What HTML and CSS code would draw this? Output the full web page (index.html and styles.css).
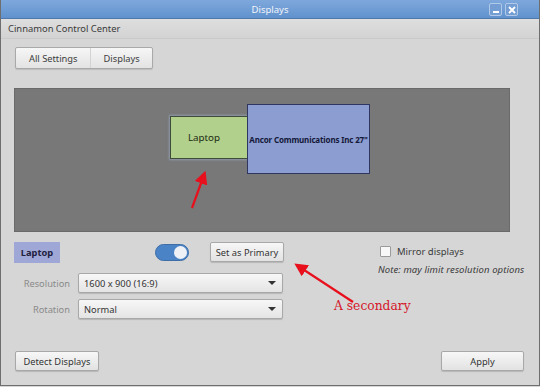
FILE: index.html
```html
<!DOCTYPE html>
<html lang="en">
<head>
  <meta charset="UTF-8" />
  <title>Displays</title>
  <link rel="stylesheet" href="styles.css">
</head>
<body>
  <div class="window">
    <div class="titlebar">
      <span class="title">Displays</span>
      <div class="wm-buttons">
        <span class="wm-btn"><svg width="10" height="10" viewBox="0 0 10 10"><rect x="2" y="6" width="6" height="2" fill="#fff"/></svg></span>
        <span class="wm-btn"><svg width="10" height="10" viewBox="0 0 10 10"><path d="M2 2 L8 8 M8 2 L2 8" stroke="#fff" stroke-width="1.8"/></svg></span>
      </div>
    </div>

    <div class="appbar">Cinnamon Control Center</div>

    <div class="content">
      <div class="crumbs">
        <span class="crumb">All Settings</span>
        <span class="crumb">Displays</span>
      </div>

      <div class="arrangement">
        <div class="monitor laptop">Laptop</div>
        <div class="monitor ancor">Ancor Communications Inc 27"</div>
      </div>

      <div class="controls">
        <div class="left-col">
          <div class="row-top">
            <span class="output-name">Laptop</span>
            <span class="switch"><span class="knob"></span></span>
            <button class="btn primary-btn">Set as Primary</button>
          </div>
          <div class="field">
            <span class="field-label">Resolution</span>
            <div class="combo"><span>1600 x 900 (16:9)</span><span class="caret"></span></div>
          </div>
          <div class="field">
            <span class="field-label">Rotation</span>
            <div class="combo"><span>Normal</span><span class="caret"></span></div>
          </div>
        </div>
        <div class="right-col">
          <label class="mirror"><span class="check"></span>Mirror displays</label>
          <p class="note">Note: may limit resolution options</p>
        </div>
      </div>

      <div class="footer">
        <button class="btn detect-btn">Detect Displays</button>
        <button class="btn apply-btn">Apply</button>
      </div>
    </div>

    <!-- annotations drawn on top of the screenshot -->
    <svg class="annotations" width="540" height="387" viewBox="0 0 540 387">
      <defs>
        <marker id="head" markerWidth="6" markerHeight="6" refX="4" refY="3" orient="auto" markerUnits="strokeWidth">
          <path d="M0 0 L6 3 L0 6 Z" fill="#e8101c"/>
        </marker>
      </defs>
      <line x1="191" y1="208" x2="203" y2="175" stroke="#e8101c" stroke-width="2.2" marker-end="url(#head)"/>
      <line x1="352" y1="302" x2="297" y2="266" stroke="#e8101c" stroke-width="2.2" marker-end="url(#head)"/>
    </svg>
    <span class="secondary-note">A secondary</span>
  </div>
</body>
</html>
```

FILE: styles.css
```css
body {
  margin: 0;
  font-family: "Noto Sans", "DejaVu Sans", sans-serif;
  font-size: 9.3px;
  color: #333;
  background: #d6d6d6;
}
.window {
  position: relative;
  width: 538px;
  height: 385px;
  border: 1px solid #6e6e6e;
  border-top: none;
  background: #d6d6d6;
  overflow: hidden;
}
.titlebar {
  height: 18px;
  background: linear-gradient(#7ea8dc, #6192cd);
  border-bottom: 1px solid #4f79ad;
  display: flex;
  align-items: center;
  justify-content: center;
  position: relative;
}
.title {
  color: #f2f5fa;
  font-size: 9.5px;
}
.wm-buttons {
  position: absolute;
  right: 21px;
  top: 3px;
  display: flex;
  gap: 3px;
}
.wm-btn {
  width: 11px;
  height: 11px;
  border: 1px solid #b1c9e8;
  border-radius: 2px;
  background: #739dd3;
  display: flex;
  align-items: center;
  justify-content: center;
}
.appbar {
  height: 19px;
  padding-left: 7px;
  line-height: 19px;
  font-size: 9.4px;
  color: #3a3a3a;
  background: linear-gradient(#dedede, #d3d3d3);
  border-bottom: 1px solid #cacaca;
}
.content {
  padding: 8px 29px 0 13px;
}
.crumbs {
  display: inline-flex;
  margin-left: 1px;
  border: 1px solid #a9a9a9;
  border-radius: 2px;
  background: linear-gradient(#f6f6f6, #e3e3e3);
  box-shadow: 0 1px 1px rgba(0,0,0,0.12);
  height: 20px;
}
.crumb {
  display: flex;
  align-items: center;
  padding: 0 12px 0 13px;
  font-size: 9.3px;
  color: #3c3c3c;
}
.crumb + .crumb {
  border-left: 1px solid #d3d3d3;
}
.arrangement {
  position: relative;
  margin-top: 19px;
  height: 144px;
  background: #787878;
  border: 1px solid #6a6a6a;
  box-sizing: border-box;
}
.monitor {
  position: absolute;
  display: flex;
  align-items: center;
  justify-content: center;
  box-sizing: border-box;
  color: #1d2a12;
}
.laptop {
  left: 155px;
  top: 27px;
  width: 78px;
  height: 43px;
  background: #b0d08b;
  border: 1px solid #3d4d3a;
  font-size: 9.8px;
  padding-right: 10px;
  box-shadow: 0 0 2px 1px rgba(170, 190, 220, 0.5);
}
.ancor {
  left: 232px;
  top: 15px;
  width: 123px;
  height: 70px;
  background: #8c9ed1;
  border: 1px solid #2f3760;
  font-size: 8px;
  font-weight: bold;
  color: #14183a;
  white-space: nowrap;
  letter-spacing: -0.15px;
}
.controls {
  display: flex;
  margin-top: 9px;
}
.left-col {
  width: 270px;
}
.row-top {
  display: flex;
  align-items: center;
  height: 22px;
}
.output-name {
  width: 46px;
  height: 21px;
  background: #9fa7d6;
  display: flex;
  align-items: center;
  justify-content: center;
  font-weight: bold;
  font-size: 9.3px;
  color: #1e2140;
}
.switch {
  margin-left: 95px;
  width: 34px;
  height: 17px;
  border-radius: 9px;
  background: #4a84c6;
  border: 1px solid #3d6ea8;
  box-sizing: border-box;
  position: relative;
}
.knob {
  position: absolute;
  right: 1px;
  top: 1px;
  width: 13px;
  height: 13px;
  border-radius: 50%;
  background: #eef1f6;
}
.btn {
  font-family: inherit;
  font-size: 9.3px;
  color: #333;
  height: 20px;
  padding: 0 7px;
  border: 1px solid #a8a8a8;
  border-radius: 2px;
  background: linear-gradient(#f7f7f7, #e2e2e2);
  box-shadow: 0 1px 1px rgba(0,0,0,0.15);
}
.primary-btn {
  margin-left: 21px;
  width: 74px;
  padding: 0;
}
.field {
  display: flex;
  align-items: center;
  margin-top: 10px;
}
.field + .field {
  margin-top: 6px;
}
.field-label {
  width: 56px;
  text-align: right;
  color: #8a8a8a;
  font-size: 9.3px;
}
.combo {
  margin-left: 8px;
  width: 205px;
  height: 20px;
  box-sizing: border-box;
  border: 1px solid #a8a8a8;
  border-radius: 2px;
  background: linear-gradient(#f7f7f7, #e4e4e4);
  box-shadow: 0 1px 1px rgba(0,0,0,0.15);
  display: flex;
  align-items: center;
  justify-content: space-between;
  padding: 0 6px 0 5px;
  font-size: 9.3px;
  color: #333;
}
.caret {
  width: 0;
  height: 0;
  border-left: 4px solid transparent;
  border-right: 4px solid transparent;
  border-top: 4px solid #333;
}
.right-col {
  margin-left: 94px;
  padding-top: 4px;
}
.mirror {
  display: flex;
  align-items: center;
  margin-left: 2px;
  font-size: 9.5px;
  color: #3a3a3a;
}
.check {
  width: 9px;
  height: 9px;
  border: 1px solid #9a9a9a;
  border-radius: 1px;
  background: #f8f8f8;
  margin-right: 6px;
}
.note {
  margin: 5px 0 0;
  font-style: italic;
  font-size: 9.5px;
  color: #3a3a3a;
  white-space: nowrap;
  letter-spacing: 0.1px;
}
.footer {
  display: flex;
  justify-content: space-between;
  margin-top: 32px;
  padding-left: 1px;
}
.detect-btn {
  width: 84px;
  padding: 0;
}
.apply-btn {
  width: 83px;
  margin-right: -14px;
}
.annotations {
  position: absolute;
  left: 0;
  top: 0;
  pointer-events: none;
}
.secondary-note {
  position: absolute;
  left: 333px;
  top: 299px;
  font-family: "DejaVu Serif", "Liberation Serif", serif;
  font-size: 12.3px;
  color: #d4162a;
}
```
